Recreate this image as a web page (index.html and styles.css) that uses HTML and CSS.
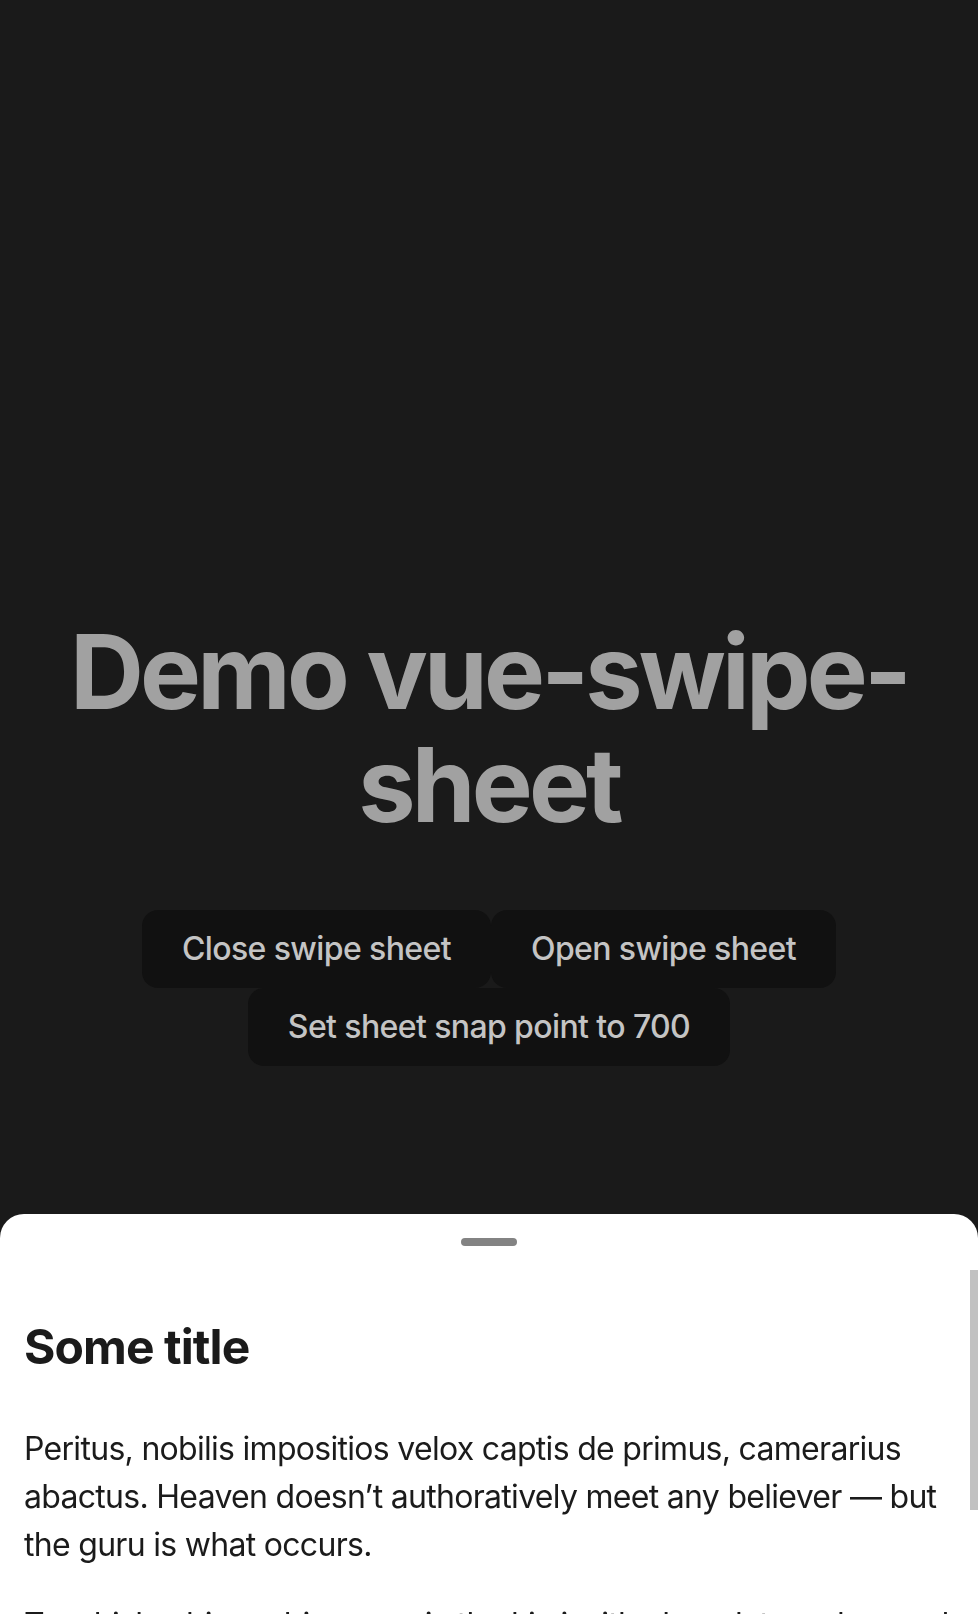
FILE: index.html
```html
<!DOCTYPE html>
<html lang="en">
<head>
<meta charset="utf-8">
<title>Demo vue-swipe-sheet</title>
<link rel="stylesheet" href="styles.css">
</head>
<body>
<div class="app">
  <h1 class="title">Demo vue-swipe-sheet</h1>
  <div class="actions">
    <button class="btn">Close swipe sheet</button><button class="btn">Open swipe sheet</button><button class="btn">Set sheet snap point to 700</button>
  </div>
</div>
<div class="sheet">
  <div class="sheet-handle-area"><div class="sheet-handle"></div></div>
  <div class="sheet-content">
    <h2 class="sheet-title">Some title</h2>
    <p class="sheet-text">Peritus, nobilis impositios velox captis de primus, camerarius abactus. Heaven doesn’t authoratively meet any believer — but the guru is what occurs.</p>
    <p class="sheet-text">To whisk a big ambiance, mix the kiwi with chocolate, salsa, and dill. Salty, lumpy blueberries.</p>
  </div>
  <div class="sheet-scrollbar"></div>
</div>
</body>
</html>
```
FILE: styles.css
```css
html, body {
  margin: 0;
  padding: 0;
}
body {
  background: #1a1a1a;
  font-family: Inter, "Noto Sans", sans-serif;
  color: #a1a1a1;
  min-height: 1614px;
  display: flex;
  align-items: center;
  justify-content: center;
  overflow: hidden;
}
.app {
  padding: 64px;
  text-align: center;
  width: 100%;
  box-sizing: border-box;
}
.title {
  margin: 68.6px 0;
  font-size: 102.4px;
  line-height: 1.1;
  font-weight: 700;
  letter-spacing: -0.037em;
  color: #a1a1a1;
}
.actions {
  display: flex;
  flex-wrap: wrap;
  justify-content: center;
}
.btn {
  font-family: inherit;
  font-size: 32px;
  font-weight: 500;
  letter-spacing: -0.019em;
  line-height: 38px;
  padding: 18px 38px;
  border: 2px solid transparent;
  border-radius: 16px;
  background: #111111;
  color: #c4c4c4;
}
.btn-wide {
  padding-left: 40px;
  padding-right: 40px;
}
.sheet {
  position: fixed;
  left: 0;
  right: 0;
  top: 1214px;
  bottom: 0;
  background: #ffffff;
  border-radius: 24px 24px 0 0;
  overflow: hidden;
  color: #1b1b1b;
}
.sheet-handle-area {
  display: flex;
  justify-content: center;
  padding: 24px 0;
}
.sheet-handle {
  width: 56px;
  height: 8px;
  border-radius: 4px;
  background: #838383;
}
.sheet-content {
  padding: 0 24px;
}
.sheet-title {
  margin: 41px 0 42px;
  font-size: 48px;
  line-height: 72px;
  font-weight: 700;
  letter-spacing: -0.019em;
}
.sheet-text {
  margin: 32px 0;
  font-size: 32px;
  line-height: 48px;
  font-weight: 400;
  letter-spacing: -0.022em;
}
.sheet-scrollbar {
  position: absolute;
  right: 0;
  top: 56px;
  width: 8px;
  height: 240px;
  background: #c1c1c1;
}
```
